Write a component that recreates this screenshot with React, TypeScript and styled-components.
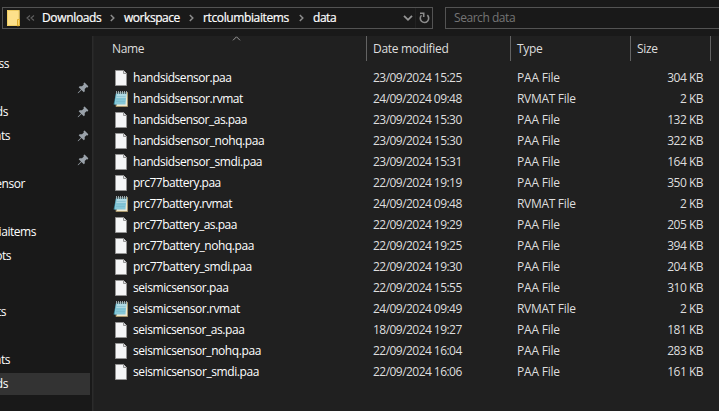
import React from 'react';
import styled, { createGlobalStyle } from 'styled-components';

const Global = createGlobalStyle`
  html, body { margin: 0; background: #191919; }
  * { box-sizing: border-box; }
`;

const Window = styled.div`
  width: 719px;
  height: 411px;
  display: flex;
  flex-direction: column;
  overflow: hidden;
  background: #191919;
  color: #fff;
  font: 12px/16px 'Open Sans', 'Noto Sans', sans-serif;
  white-space: pre;
`;

const Toolbar = styled.div`
  height: 36px;
  flex: none;
  display: flex;
  padding: 7px 0 7px 2px;
  gap: 12px;
`;

const AddressBar = styled.div`
  width: 431px;
  height: 22px;
  flex: none;
  display: flex;
  align-items: center;
  border: 1px solid #535353;
  padding-left: 4px;
`;

const Crumb = styled.span<{ $w: number; $ls: number }>`
  width: ${(p) => p.$w}px;
  flex: none;
  letter-spacing: ${(p) => p.$ls}px;
  -webkit-text-stroke: 0.2px #fff;
`;

const Slot = styled.span<{ $w: number }>`
  width: ${(p) => p.$w}px;
  height: 20px;
  flex: none;
  display: flex;
  align-items: center;
`;

const Refresh = styled(Slot)`
  border-left: 1px solid #222;
  padding-left: 2px;
`;

const Search = styled.div`
  width: 280px;
  height: 22px;
  flex: none;
  border: 1px solid #535353;
  padding: 2px 8px;
  color: #757575;
  letter-spacing: -0.45px;
`;

const Body = styled.div`
  flex: 1;
  display: flex;
`;

const Sidebar = styled.nav`
  width: 92px;
  flex: none;
  padding-top: 16px;
`;

const NavItem = styled.div<{ $end: number; $active?: boolean; $gap?: boolean }>`
  width: 90px;
  height: 24px;
  margin-top: ${(p) => (p.$gap ? 8 : 0)}px;
  display: flex;
  align-items: center;
  justify-content: space-between;
  border: solid #191919;
  border-width: 1px 0;
  background: ${(p) => (p.$active ? '#333' : 'transparent')};

  & > span {
    width: ${(p) => p.$end}px;
    display: flex;
    justify-content: flex-end;
    letter-spacing: -0.45px;
  }
  & > svg { margin-right: 1px; }
`;

const Splitter = styled.div`
  width: 2px;
  flex: none;
  background: #2b2b2b;
  border-right: 1px solid #252525;
`;

const Pane = styled.main`
  flex: 1;
  background: #202020;
`;

const columns = '272px 144px 120px 80px';

const Header = styled.div`
  position: relative;
  display: grid;
  grid-template-columns: ${columns};
  width: 617px;
  height: 25px;
  margin-bottom: 6px;
  padding-left: 1px;
`;

const HeaderCell = styled.div<{ $pad: number; $ls: number }>`
  border-right: 1px solid #636363;
  padding: 5px 0 0 ${(p) => p.$pad}px;
  color: #dedede;
  letter-spacing: ${(p) => p.$ls}px;
`;

const SortMark = styled.svg`
  position: absolute;
  left: 138px;
  top: 0;
`;

const Row = styled.div`
  display: grid;
  grid-template-columns: ${columns};
  height: 21px;
  padding-left: 1px;
  align-items: center;
`;

const NameCell = styled.div`
  display: flex;
  align-items: center;
  padding-left: 18px;

  & > svg { flex: none; margin-right: 4px; }
`;

const FileName = styled.span<{ $ls: number }>`
  letter-spacing: ${(p) => p.$ls}px;
`;

const Cell = styled.div<{ $ls: number; $right?: boolean }>`
  color: #dedede;
  padding-left: ${(p) => (p.$right ? 0 : 6)}px;
  padding-right: ${(p) => (p.$right ? 8 : 0)}px;
  text-align: ${(p) => (p.$right ? 'right' : 'left')};
  letter-spacing: ${(p) => p.$ls}px;
`;

const Folder = () => (
  <svg width="14" height="18" viewBox="0 0 14 18">
    <path d="M0 1h12.500v9.500h.5V17H0z" fill="#fde08a" />
    <path d="M.5 1.500h11.500v9" fill="none" stroke="#edca60" />
    <path d="M.5 1.500V16.500H10.500" fill="none" stroke="#f3cf62" />
    <path d="M10.500 17v-6.500h2v6z" fill="#f5d570" stroke="#e0ae2c" />
  </svg>
);

const Back = () => (
  <svg width="9" height="8" viewBox="0 0 9 8" fill="none" stroke="#606060" strokeWidth="1.1">
    <path d="M4 1.500L1 4l3 2.500M8 1.500L5 4l3 2.500" />
  </svg>
);

const Chevron = () => (
  <svg width="5" height="8" viewBox="0 0 5 8" fill="none" stroke="#8c8c8c" strokeWidth="1.5">
    <path d="M.8 1L3.800 4 .8 7" />
  </svg>
);

const Pin = () => (
  <svg width="12" height="12" viewBox="0 0 12 12">
    <path d="M6.500 1.200L7.600.6 11.300 4.300 10.700 5.400 9.500 5.200 7.700 7l.1 2.300-1 1L4.500 8 1.500 11l-.8.3.3-.8L4 7.500 1.700 5.200l1-1L5 4.300 6.800 2.500z" fill="#9aa2aa" />
  </svg>
);

const Page = () => (
  <svg width="16" height="16" viewBox="0 0 16 16">
    <path d="M2.500.5h8l3 3v12h-11z" fill="#f5f6f7" stroke="#949494" />
    <path d="M10.500.5v3h3" fill="#dfe2e4" stroke="#949494" />
  </svg>
);

const Notepad = () => (
  <svg width="16" height="16" viewBox="0 0 16 16">
    <path d="M5 1.500h9.500v14H3z" fill="#eee9d2" stroke="#a8966a" />
    <path d="M3 2L.5 13.500h3L5 3z" fill="#327f91" />
    <path d="M3 2h10.500l-1 11.500H1.500z" fill="#85c8d8" />
    <path d="M4 2.500h9.500l-.4 4.500H3.300z" fill="#add9e3" />
    <path d="M3.600 5.500h9M3.300 8h9M2.900 10.500h9" stroke="#72b5c7" strokeWidth=".5" />
    <path d="M3.500 0v3M5.500 0v3M7.500 0v3M9.500 0v3M11.500 0v3M13.500 0v3" stroke="#a6b6bc" strokeWidth=".9" />
    <path d="M4.500 1v2M6.500 1v2M8.500 1v2M10.500 1v2M12.500 1v2" stroke="#34545d" strokeWidth=".8" />
  </svg>
);

const nav: { text: string; end: number; pin?: boolean; active?: boolean; gap?: boolean }[] = [
  { text: 'ss', end: 9 },
  { text: '', end: 0, pin: true },
  { text: 'ds', end: 8, pin: true },
  { text: 'nts', end: 10, pin: true },
  { text: '', end: 0, pin: true },
  { text: 'ensor', end: 25 },
  { text: '', end: 0 },
  { text: 'iaitems', end: 36 },
  { text: 'ots', end: 11 },
  { text: '', end: 0, gap: true },
  { text: 'ts', end: 6 },
  { text: '', end: 0 },
  { text: 'nts', end: 10 },
  { text: 'ds', end: 8, active: true },
];

const files: [string, string, number, number][] = [
  ['handsidsensor.paa', '23/09/2024 15:25', 304, -0.46],
  ['handsidsensor.rvmat', '24/09/2024 09:48', 2, -0.46],
  ['handsidsensor_as.paa', '23/09/2024 15:30', 132, -0.5],
  ['handsidsensor_nohq.paa', '23/09/2024 15:30', 322, -0.44],
  ['handsidsensor_smdi.paa', '23/09/2024 15:31', 164, -0.44],
  ['prc77battery.paa', '22/09/2024 19:19', 350, -0.5],
  ['prc77battery.rvmat', '24/09/2024 09:48', 2, -0.5],
  ['prc77battery_as.paa', '22/09/2024 19:29', 205, -0.5],
  ['prc77battery_nohq.paa', '22/09/2024 19:25', 394, -0.45],
  ['prc77battery_smdi.paa', '22/09/2024 19:30', 204, -0.45],
  ['seismicsensor.paa', '22/09/2024 15:55', 310, -0.42],
  ['seismicsensor.rvmat', '24/09/2024 09:49', 2, -0.42],
  ['seismicsensor_as.paa', '18/09/2024 19:27', 181, -0.44],
  ['seismicsensor_nohq.paa', '22/09/2024 16:04', 283, -0.42],
  ['seismicsensor_smdi.paa', '22/09/2024 16:06', 161, -0.41],
];

export default function App() {
  return (
    <Window>
      <Global />
      <Toolbar>
        <AddressBar>
          <Slot $w={19}><Folder /></Slot>
          <Slot $w={16}><Back /></Slot>
          <Crumb $w={68} $ls={-0.34}>Downloads</Crumb>
          <Slot $w={14}><Chevron /></Slot>
          <Crumb $w={65} $ls={-0.45}>workspace</Crumb>
          <Slot $w={14}><Chevron /></Slot>
          <Crumb $w={96} $ls={-0.38}>rtcolumbiaitems</Crumb>
          <Slot $w={14}><Chevron /></Slot>
          <Crumb $w={90} $ls={-0.45}>data</Crumb>
          <Slot $w={12}>
            <svg width="10" height="8" viewBox="0 0 10 8" fill="none" stroke="#969696" strokeWidth="1.8">
              <path d="M1 1.800l4 4 4-4" />
            </svg>
          </Slot>
          <Refresh $w={17}>
            <svg width="13" height="14" viewBox="0 0 13 14" fill="none" stroke="#8c8c8c" strokeWidth="1.600">
              <path d="M3.500 4.300A4.200 4.200 0 1 0 9.300 4.200" />
              <path d="M5.700 6V2.300M2 2.300H6.500" />
            </svg>
          </Refresh>
        </AddressBar>
        <Search>Search data</Search>
      </Toolbar>
      <Body>
        <Sidebar>
          {nav.map((n, i) => (
            <NavItem key={i} $end={n.end} $active={n.active} $gap={n.gap}>
              <span>{n.text}</span>
              {n.pin && <Pin />}
            </NavItem>
          ))}
        </Sidebar>
        <Splitter />
        <Pane>
          <Header>
            <HeaderCell $pad={17} $ls={-0.35}>Name</HeaderCell>
            <HeaderCell $pad={6} $ls={-0.3}>Date modified</HeaderCell>
            <HeaderCell $pad={6} $ls={-0.3}>Type</HeaderCell>
            <HeaderCell $pad={6} $ls={-0.3}>Size</HeaderCell>
            <SortMark width="9" height="5" viewBox="0 0 9 5" fill="none" stroke="#9a9a9a">
              <path d="M1 4.300L4.500.8 8 4.300" />
            </SortMark>
          </Header>
          {files.map(([name, date, size, spacing]) => {
            const isMaterial = name.endsWith('.rvmat');
            return (
              <Row key={name}>
                <NameCell>
                  {isMaterial ? <Notepad /> : <Page />}
                  <FileName $ls={spacing}>{name}</FileName>
                </NameCell>
                <Cell $ls={-0.54}>{date}</Cell>
                <Cell $ls={isMaterial ? -0.3 : -0.2}>{isMaterial ? 'RVMAT File' : 'PAA File'}</Cell>
                <Cell $ls={-0.5} $right>{size} KB</Cell>
              </Row>
            );
          })}
        </Pane>
      </Body>
    </Window>
  );
}
